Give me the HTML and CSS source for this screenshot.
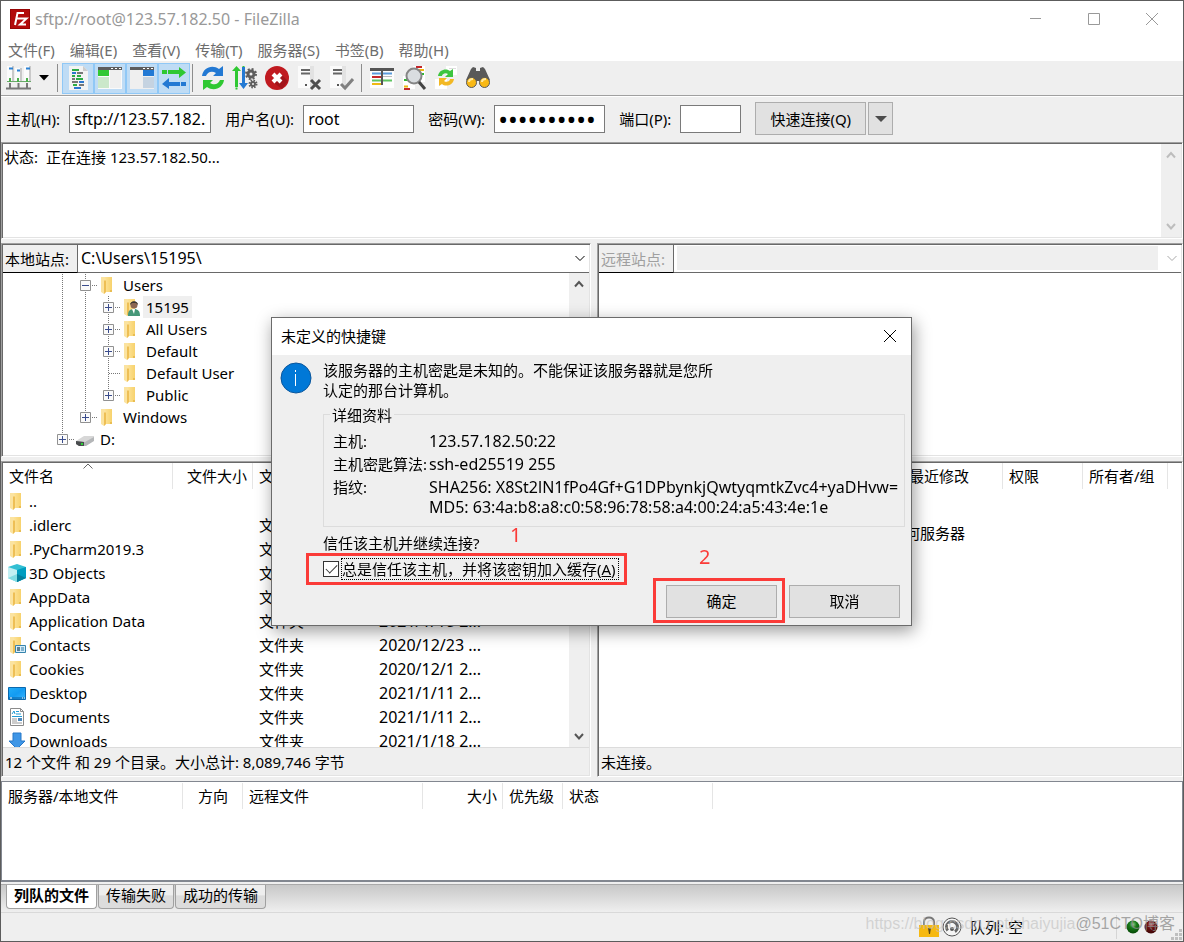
FILE: index.html
```html
<!DOCTYPE html>
<html lang="zh-CN">
<head>
<meta charset="utf-8">
<title>sftp://root@123.57.182.50 - FileZilla</title>
<link rel="stylesheet" href="styles.css">
</head>
<body>
<svg class="defs" width="0" height="0" aria-hidden="true">
  <defs>
    <linearGradient id="gold" x1="0" x2="1" y1="0" y2="0"><stop offset="0" stop-color="#fde296"/><stop offset="1" stop-color="#f7d26d"/></linearGradient>
    <linearGradient id="screen" x1="0" x2="1" y1="0" y2="1"><stop offset="0" stop-color="#22aef8"/><stop offset=".5" stop-color="#139bf2"/><stop offset="1" stop-color="#36b5ff"/></linearGradient>
    <radialGradient id="ledgreen" cx=".5" cy=".3" r=".7"><stop offset="0" stop-color="#8fc98f"/><stop offset=".4" stop-color="#177a17"/><stop offset="1" stop-color="#064706"/></radialGradient>
    <radialGradient id="ledred" cx=".5" cy=".3" r=".7"><stop offset="0" stop-color="#c79090"/><stop offset=".4" stop-color="#6e1212"/><stop offset="1" stop-color="#3c0404"/></radialGradient>
    <symbol id="folder" viewBox="0 0 18 18"><path d="M6 1h7v15H6z" fill="url(#gold)"/><path d="M2 1h4v2l1 1v12l-2 2-3-2z" fill="#fbe3a0"/><path d="M6 4l1 1v11l-2 2V5z" fill="#eebf55"/><path d="M11 14h2v2h-2z" fill="#e9bd52"/></symbol>
    <symbol id="userfolder" viewBox="0 0 18 18"><use href="#folder"/><circle cx="12" cy="7" r="3.500" fill="#8c6651"/><path d="M8 7c0-5 8-5 8 0l-2-2H10z" fill="#3b3733"/><path d="M6 17c0-4 2-6 6-6s6 2 6 7H6z" fill="#459778"/><path d="M10 11h3l-1 5z" fill="#fff"/></symbol>
    <symbol id="cardfolder" viewBox="0 0 18 18"><use href="#folder"/><path d="M7.500 9.500h10v7h-10z" fill="#d9eefa" stroke="#3684ad"/><path d="M9 11h3v4H9z" fill="#60818f"/><path d="M13 12h3M13 14h3" stroke="#2b7aa5"/></symbol>
    <symbol id="cube" viewBox="0 0 18 18"><path d="M9 0l9 3v11l-9 4-9-4V3z" fill="#32bfd3"/><path d="M0 3l9 3v12l-9-4z" fill="#c2eff3"/><path d="M9 6l9-3v11l-9 4z" fill="#009dc0"/><path d="M0 14l9-4v8z" fill="#82dce3"/><path d="M9 10l9 4-9 4z" fill="#057f9c"/></symbol>
    <symbol id="desktop" viewBox="0 0 18 18"><path d="M.5 3.500h17v12H.5z" fill="url(#screen)" stroke="#0b69ae"/><path d="M1 14h16" stroke="#0a5c9c"/><path d="M2 14h2M14 14h1M16 14h1" stroke="#fff"/></symbol>
    <symbol id="docs" viewBox="0 0 18 18"><path d="M2.500.5h10l3 3v14h-13z" fill="#fff" stroke="#8b8b8b"/><path d="M12.500.5v3h3" fill="none" stroke="#8b8b8b"/><path d="M4 6l2-3 1 3M8 3.500h3M8 6h5M4 8.500h10" fill="none" stroke="#239bd4"/><path d="M4 11h5M4 13h5M4 15h10" stroke="#999"/><path d="M10 10h4v3h-4z" fill="#4b88bd"/></symbol>
    <symbol id="down" viewBox="0 0 18 18"><path d="M5 1h8v8h4l-8 8-8-8h4z" fill="#3f96e6" stroke="#2778c9"/></symbol>
    <symbol id="drive" viewBox="0 0 18 18"><path d="M0 11l8-5h10v4l-8 5H3l-3-2z" fill="#d7d7d7"/><path d="M0 11l9 1 9-5v4l-8 5H3l-3-2z" fill="#b4b6b8"/><path d="M0 11l8 1v4H3l-3-2z" fill="#494c4e"/><path d="M5 13h2v2H5z" fill="#2bd334"/></symbol>
    <symbol id="plus" viewBox="0 0 23 22"><path d="M11.500 0v22M18 11.500h5" stroke="#777" stroke-dasharray="1 1"/><path d="M6.500 6.500h10v10h-10z" fill="#fafafa" stroke="#919191"/><path d="M8 11.500h7M11.500 8v7" stroke="#3a4c8c"/></symbol>
    <symbol id="pluslast" viewBox="0 0 23 22"><path d="M11.500 0v7M18 11.500h5" stroke="#777" stroke-dasharray="1 1"/><path d="M6.500 6.500h10v10h-10z" fill="#fafafa" stroke="#919191"/><path d="M8 11.500h7M11.500 8v7" stroke="#3a4c8c"/></symbol>
    <symbol id="minus" viewBox="0 0 23 22"><path d="M11.500 0v22M18 11.500h5" stroke="#777" stroke-dasharray="1 1"/><path d="M6.500 6.500h10v10h-10z" fill="#fafafa" stroke="#919191"/><path d="M8 11.500h7" stroke="#3a4c8c"/></symbol>
    <symbol id="line" viewBox="0 0 23 22"><path d="M11.500 0v22" stroke="#777" stroke-dasharray="1 1"/></symbol>
    <symbol id="tee" viewBox="0 0 23 22"><path d="M11.500 0v22M12 11.500h11" stroke="#777" stroke-dasharray="1 1"/></symbol>
    <symbol id="up-chev" viewBox="0 0 12 12"><path d="M2 8.500L6 4l4 4.500" fill="none" stroke="currentColor" stroke-width="2"/></symbol>
    <symbol id="down-chev" viewBox="0 0 12 12"><path d="M2 4l4 4.500L10 4" fill="none" stroke="currentColor" stroke-width="2"/></symbol>
    <symbol id="thin-chev" viewBox="0 0 12 12"><path d="M1.500 4L6 8.500 10.500 4" fill="none" stroke="currentColor"/></symbol>
    <symbol id="page" viewBox="0 0 26 26"><path d="M2 1h16v22H2z" fill="#fbfbfb"/><path d="M14 1h4v22h-4z" fill="#e2e2e2"/><path d="M5 5h9M5 8.500h9" stroke="#666" stroke-width="2"/></symbol>
  </defs>
</svg>

<div class="window">
  <header class="titlebar">
    <svg class="logo" width="20" height="20" viewBox="0 0 20 20"><path d="M0 0h20v20H0z" fill="#b30b0b"/><path d="M.5.5h19v19H.5z" fill="none" stroke="#7b0000" stroke-dasharray="1 1"/><path d="M5 16L7.500 4H14M6.500 9.500H11M10.500 9.500h6L10 15.500h6" fill="none" stroke="#fff" stroke-width="2"/></svg>
    <h1 class="title">sftp://root@123.57.182.50 - FileZilla</h1>
    <div class="winbuttons">
      <button aria-label="最小化"><svg width="14" height="14"><path d="M1 6.500h11" stroke="#999"/></svg></button>
      <button aria-label="最大化"><svg width="14" height="14"><path d="M1.500 1.500h11v11h-11z" fill="none" stroke="#999"/></svg></button>
      <button aria-label="关闭"><svg width="14" height="14"><path d="M1 1l12 12M13 1L1 13" stroke="#999"/></svg></button>
    </div>
  </header>

  <nav class="menu">
    <button>文件(F)</button><button>编辑(E)</button><button>查看(V)</button><button>传输(T)</button><button>服务器(S)</button><button>书签(B)</button><button>帮助(H)</button>
  </nav>

  <div class="toolbar">
    <button class="tool" aria-label="站点管理器"><svg width="26" height="26" viewBox="0 0 26 26"><path d="M1 1h7v15H1zM9 3h7v13H9zM18 1h7v15h-7z" fill="#fbfbfb"/><path d="M6 1h2v15H6zM14 3h2v13h-2zM23 1h2v15h-2z" fill="#c9c9c9"/><path d="M3 3.500h4M11 5.500h3M20 3.500h4" stroke="#2d82d4" stroke-width="2"/><path d="M4 18v5M12.500 18v5M21 18v5M0 23.500h25" stroke="#777" stroke-width="2"/><path d="M1 16.500h24" stroke="#69a869"/><path d="M3 13h2v4H3zM11 13h2v4h-2zM20 13h2v4h-2z" fill="#4bb04b"/></svg></button>
    <button class="tool drop" aria-label="站点列表"><svg width="10" height="6"><path d="M0 0h10L5 5.500z"/></svg></button>
    <span class="sep"></span>
    <button class="tool on" aria-label="消息日志"><svg width="26" height="26" viewBox="0 0 26 26"><path d="M4 1h14l5 5v19H4z" fill="#f3f3f3"/><path d="M18 1l5 5h-5z" fill="#ccc"/><path d="M7 5h7M7 11h3M12 11h4M11 14h7M8 20h4" stroke="#2cac45" stroke-width="2"/><path d="M12 8h6M7 14h3M7 17h6M14 20h5" stroke="#777" stroke-width="2"/><path d="M7 8h4M14 17h5M9 23h7" stroke="#2b78cf" stroke-width="2"/></svg></button>
    <button class="tool on" aria-label="本地目录树"><svg width="26" height="26" viewBox="0 0 26 26"><path d="M1 2h24v22H1z" fill="#fafafa"/><path d="M1 2h24v3H1z" fill="#5d5d5d"/><path d="M14 3.500h2M18 3.500h2M22 3.500h2" stroke="#fff"/><path d="M1 5h11v6H1z" fill="#31c833"/><path d="M1 12h11v11H1z" fill="#cbe8ca"/><path d="M13 5h11v18H13z" fill="#efefef"/></svg></button>
    <button class="tool on" aria-label="远程目录树"><svg width="26" height="26" viewBox="0 0 26 26"><path d="M1 2h24v22H1z" fill="#efefef"/><path d="M1 2h24v3H1z" fill="#5d5d5d"/><path d="M14 3.500h2M18 3.500h2M22 3.500h2" stroke="#fff"/><path d="M14 5h11v6H14z" fill="#2279d4"/><path d="M14 12h11v11H14z" fill="#c5d3e1"/></svg></button>
    <button class="tool on" aria-label="传输队列"><svg width="26" height="26" viewBox="0 0 26 26"><path d="M1 5h5v4H1zM7 5h11V2l7 5.500-7 5.500V9H7z" fill="#2fc832"/><path d="M25 17h-5v4h5zM19 17H8v-4l-7 6 7 5v-3h11z" fill="#2379d3"/></svg></button>
    <span class="sep tight"></span>
    <button class="tool" aria-label="刷新"><svg width="28" height="28" viewBox="0 0 28 28"><path d="M3 12C4 4 13 0 20 5l4-3v10H14l3-3c-5-3-9 0-10 3z" fill="#2379d3"/><path d="M25 16c-1 8-10 12-17 7l-4 3V16h10l-3 3c5 3 9 0 10-3z" fill="#2fc832"/></svg></button>
    <button class="tool" aria-label="处理队列"><svg width="26" height="26" viewBox="0 0 26 26"><path d="M4.500 1L9 6H6v16H3V6H0z" fill="#2fc832"/><path d="M4.500 24.500v-2M11.500 1v3" stroke="#2fc832" stroke-width="2"/><path d="M10 2h3v16h3l-4.500 6L7 18h3z" fill="#2379d3"/><circle cx="19" cy="9" r="3" fill="none" stroke="#5d5d5d" stroke-width="3"/><circle cx="19" cy="9" r="5" fill="none" stroke="#5d5d5d" stroke-width="2" stroke-dasharray="2 1.930"/><circle cx="21" cy="19" r="2" fill="none" stroke="#5d5d5d" stroke-width="2"/><circle cx="21" cy="19" r="3.500" fill="none" stroke="#5d5d5d" stroke-width="2" stroke-dasharray="1.500 1.250"/></svg></button>
    <button class="tool" aria-label="取消"><svg width="26" height="26" viewBox="0 0 26 26"><circle cx="13" cy="13" r="12" fill="#c01a20"/><path d="M17 9l7 7-6 8-9-7z" fill="#a2141a"/><path d="M9 9l8 8M17 9l-8 8" stroke="#fff" stroke-width="4"/></svg></button>
    <button class="tool" aria-label="断开连接"><svg width="26" height="26" viewBox="0 0 26 26"><use href="#page"/><path d="M9 19h2v2H9z" fill="#555"/><path d="M15 15l9 9M24 15l-9 9" stroke="#4d4d4d" stroke-width="3"/></svg></button>
    <button class="tool" aria-label="重新连接"><svg width="26" height="26" viewBox="0 0 26 26"><use href="#page"/><path d="M9 19h2v2H9z" fill="#555"/><path d="M13 19l4 4 8-9" fill="none" stroke="#808080" stroke-width="3"/></svg></button>
    <span class="sep"></span>
    <button class="tool" aria-label="过滤"><svg width="26" height="26" viewBox="0 0 26 26"><path d="M1 3h24v20H1z" fill="#fdfdfd"/><path d="M1 3h24v3H1z" fill="#555"/><path d="M3 8.500h9M14 8.500h9" stroke="#5b9bdc" stroke-width="2"/><path d="M3 12h9" stroke="#c4262a" stroke-width="2"/><path d="M14 11.500h9" stroke="#bbb"/><path d="M3 15.500h9M14 15.500h9" stroke="#5fc461" stroke-width="2"/><path d="M3 19h9" stroke="#efb813" stroke-width="2"/><path d="M13 6v14" stroke="#555" stroke-width="2"/></svg></button>
    <button class="tool" aria-label="目录对比"><svg width="26" height="26" viewBox="0 0 26 26"><path d="M12 1h12v16H12zM2 11h12v13H2z" fill="#fff"/><path d="M15 2h6" stroke="#c4262a" stroke-width="2"/><path d="M18 5h5M3 21.500h4" stroke="#efb813" stroke-width="2"/><path d="M3 15h4M20 9h3" stroke="#2fb832" stroke-width="2"/><path d="M3 24h6" stroke="#c4262a" stroke-width="2"/><circle cx="13" cy="11" r="7.500" fill="#d9dde0" stroke="#858585" stroke-width="2"/><path d="M18 17l6 7" stroke="#444" stroke-width="3"/></svg></button>
    <button class="tool" aria-label="同步浏览"><svg width="26" height="26" viewBox="0 0 26 26"><path d="M13 1h11v9H13zM2 14h12v10H2z" fill="#fff"/><path d="M16 3h7v1h-7z" fill="#ddd"/><path d="M5 11c1-7 9-8 12-5l3-2v8h-8l3-3c-3-2-6 0-6 2z" fill="#3dc53f"/><path d="M21 14c-1 7-9 8-12 5l-3 2v-8h8l-3 3c3 2 6 0 6-2z" fill="#f2b824"/></svg></button>
    <button class="tool" aria-label="查找文件"><svg width="26" height="26" viewBox="0 0 26 26"><path d="M8 2l3 1v3h4V3l3-1 2 2 5 11-6 5-4-4h-4l-4 4-6-5L6 4z" fill="#595959"/><circle cx="6.500" cy="17.500" r="5" fill="#f9b915" stroke="#595959"/><circle cx="19.500" cy="17.500" r="5" fill="#f9b915" stroke="#595959"/><path d="M4 17c0-2 2-3 4-3M17 17c0-2 2-3 4-3" fill="none" stroke="#ffe9a3" stroke-width="2"/></svg></button>
  </div>

  <form class="quick">
    <div class="field"><label for="host">主机(H):</label><input id="host" class="w-host" type="text" value="sftp://123.57.182.50"></div>
    <div class="field"><label for="user">用户名(U):</label><input id="user" class="w-user" type="text" value="root"></div>
    <div class="field"><label for="pass">密码(W):</label><input id="pass" class="w-user dots" type="password" value="0123456789"></div>
    <div class="field"><label for="port">端口(P):</label><input id="port" class="w-port" type="text"></div>
    <div class="connect"><button type="button" class="btn">快速连接(Q)</button><button type="button" class="btn narrow" aria-label="快速连接历史"><svg width="12" height="6"><path d="M0 0h12L6 6z" fill="#4c4c4c"/></svg></button></div>
  </form>

  <section class="sunken log">
    <p><span class="kind">状态:</span>正在连接 123.57.182.50...</p>
    <div class="scroll off"><svg width="12" height="12"><use href="#up-chev"/></svg><svg width="12" height="12"><use href="#down-chev"/></svg></div>
  </section>

  <div class="pair sites">
    <section class="sunken pane">
      <div class="path"><label for="local">本地站点:</label><div class="combo"><select id="local"><option>C:\Users\15195\</option></select><svg width="12" height="12"><use href="#thin-chev"/></svg></div></div>
      <div class="body">
        <ul class="tree">
          <li><svg class="g"><use href="#line"/></svg><svg class="g"><use href="#minus"/></svg><svg class="ic"><use href="#folder"/></svg><span>Users</span></li>
          <li><svg class="g"><use href="#line"/></svg><svg class="g"><use href="#line"/></svg><svg class="g"><use href="#plus"/></svg><svg class="ic"><use href="#userfolder"/></svg><span class="sel">15195</span></li>
          <li><svg class="g"><use href="#line"/></svg><svg class="g"><use href="#line"/></svg><svg class="g"><use href="#plus"/></svg><svg class="ic"><use href="#folder"/></svg><span>All Users</span></li>
          <li><svg class="g"><use href="#line"/></svg><svg class="g"><use href="#line"/></svg><svg class="g"><use href="#plus"/></svg><svg class="ic"><use href="#folder"/></svg><span>Default</span></li>
          <li><svg class="g"><use href="#line"/></svg><svg class="g"><use href="#line"/></svg><svg class="g"><use href="#tee"/></svg><svg class="ic"><use href="#folder"/></svg><span>Default User</span></li>
          <li><svg class="g"><use href="#line"/></svg><svg class="g"><use href="#line"/></svg><svg class="g"><use href="#pluslast"/></svg><svg class="ic"><use href="#folder"/></svg><span>Public</span></li>
          <li><svg class="g"><use href="#line"/></svg><svg class="g"><use href="#pluslast"/></svg><svg class="ic"><use href="#folder"/></svg><span>Windows</span></li>
          <li><svg class="g"><use href="#pluslast"/></svg><svg class="ic"><use href="#drive"/></svg><span>D:</span></li>
        </ul>
        <div class="scroll"><svg width="12" height="12"><use href="#up-chev"/></svg></div>
      </div>
    </section>
    <section class="sunken pane">
      <div class="path off"><label for="remote">远程站点:</label><div class="combo"><select id="remote" disabled></select><svg width="12" height="12"><use href="#thin-chev"/></svg></div></div>
    </section>
  </div>

  <div class="pair lists">
    <section class="sunken pane">
      <div class="body">
        <div class="tablewrap">
          <table class="files">
            <colgroup><col class="c-name"><col class="c-80"><col class="c-120"><col class="c-120"><col></colgroup>
            <thead><tr><th>文件名<svg class="sort" width="10" height="6"><path d="M.5 5.500L5 1l4.500 4.500" fill="none" stroke="#666"/></svg></th><th class="r">文件大小</th><th>文件类型</th><th></th><th class="end"></th></tr></thead>
            <tbody>
              <tr><td><svg class="ic"><use href="#folder"/></svg>..</td><td></td><td></td><td></td><td></td></tr>
              <tr><td><svg class="ic"><use href="#folder"/></svg>.idlerc</td><td></td><td>文件夹</td><td></td><td></td></tr>
              <tr><td><svg class="ic"><use href="#folder"/></svg>.PyCharm2019.3</td><td></td><td>文件夹</td><td></td><td></td></tr>
              <tr><td><svg class="ic"><use href="#cube"/></svg>3D Objects</td><td></td><td>文件夹</td><td></td><td></td></tr>
              <tr><td><svg class="ic"><use href="#folder"/></svg>AppData</td><td></td><td>文件夹</td><td></td><td></td></tr>
              <tr><td><svg class="ic"><use href="#folder"/></svg>Application Data</td><td></td><td>文件夹</td><td class="date">2021/1/18 2...</td><td></td></tr>
              <tr><td><svg class="ic"><use href="#cardfolder"/></svg>Contacts</td><td></td><td>文件夹</td><td class="date">2020/12/23 ...</td><td></td></tr>
              <tr><td><svg class="ic"><use href="#folder"/></svg>Cookies</td><td></td><td>文件夹</td><td class="date">2020/12/1 2...</td><td></td></tr>
              <tr><td><svg class="ic"><use href="#desktop"/></svg>Desktop</td><td></td><td>文件夹</td><td class="date">2021/1/11 2...</td><td></td></tr>
              <tr><td><svg class="ic"><use href="#docs"/></svg>Documents</td><td></td><td>文件夹</td><td class="date">2021/1/11 2...</td><td></td></tr>
              <tr><td><svg class="ic"><use href="#down"/></svg>Downloads</td><td></td><td>文件夹</td><td class="date">2021/1/18 2...</td><td></td></tr>
            </tbody>
          </table>
        </div>
        <div class="scroll low"><svg width="12" height="12"><use href="#down-chev"/></svg></div>
      </div>
      <div class="status">12 个文件 和 29 个目录。大小总计: 8,089,746 字节</div>
    </section>
    <section class="sunken pane">
      <div class="body col">
        <table class="files">
          <colgroup><col class="c-304"><col class="c-100"><col class="c-80"><col class="c-85"><col></colgroup>
          <thead><tr><th></th><th>最近修改</th><th>权限</th><th>所有者/组</th><th class="end"></th></tr></thead>
        </table>
        <p class="empty">没有连接到任何服务器</p>
      </div>
      <div class="status">未连接。</div>
    </section>
  </div>

  <section class="queue">
    <table class="files">
      <colgroup><col class="c-181"><col class="c-60"><col class="c-180"><col class="c-80"><col class="c-60"><col class="c-150"><col></colgroup>
      <thead><tr><th>服务器/本地文件</th><th class="m">方向</th><th>远程文件</th><th class="r">大小</th><th>优先级</th><th>状态</th><th class="end"></th></tr></thead>
    </table>
  </section>

  <div class="tabs" role="tablist">
    <button role="tab" aria-selected="true" class="tab active">列队的文件</button><button role="tab" class="tab">传输失败</button><button role="tab" class="tab">成功的传输</button>
  </div>

  <footer class="foot">
    <svg width="20" height="22" viewBox="0 0 20 22"><path d="M5 11V6c0-6 10-6 10 0v5" fill="none" stroke="#777" stroke-width="2"/><path d="M0 9h20v12H0z" fill="#f6b912"/><path d="M9 12h3l-1 6h-1z" fill="#5b4a17"/></svg>
    <svg width="20" height="20" viewBox="0 0 20 20"><circle cx="10" cy="10" r="9" fill="#f5f5f5" stroke="#555"/><circle cx="10" cy="10" r="5.500" fill="none" stroke="#666" stroke-width="3" stroke-dasharray="26 9" transform="rotate(140 10 10)"/><path d="M10 12l-4-5" stroke="#fff" stroke-width="2"/><circle cx="10" cy="12" r="2" fill="#555"/></svg>
    <span class="qtext">队列: 空</span>
    <span class="leds">
      <svg width="14" height="14"><circle cx="7" cy="7" r="6.500" fill="url(#ledgreen)"/></svg>
      <svg width="14" height="14"><circle cx="7" cy="7" r="6.500" fill="url(#ledred)"/></svg>
    </span>
    <svg class="grip" width="12" height="12"><path d="M8 0h3v3H8zM4 4h3v3H4zM8 4h3v3H8zM0 8h3v3H0zM4 8h3v3H4zM8 8h3v3H8z" fill="#bfbfbf"/></svg>
    <p class="mark"><span class="url">https://blog.csdn.net/zhaiyujia</span><span class="brand">@51CTO博客</span></p>
  </footer>
</div>

<div class="overlay">
  <div class="dialog" role="dialog" aria-labelledby="dlg-title">
    <div class="dlg-head"><h2 id="dlg-title">未定义的快捷键</h2><button aria-label="关闭"><svg width="14" height="14"><path d="M1 1l12 12M13 1L1 13" stroke="#000"/></svg></button></div>
    <div class="dlg-body">
      <svg class="info" width="32" height="32"><circle cx="16" cy="16" r="15" fill="#0078d7" stroke="#0a569c"/><path d="M15.500 8v2M15.500 12v12" stroke="#fff"/></svg>
      <div class="dlg-main">
        <p class="msg">该服务器的主机密匙是未知的。不能保证该服务器就是您所<br>认定的那台计算机。</p>
        <fieldset>
          <legend>详细资料</legend>
          <dl>
            <dt>主机:</dt><dd>123.57.182.50:22</dd>
            <dt>主机密匙算法:</dt><dd>ssh-ed25519 255</dd>
            <dt>指纹:</dt><dd>SHA256: X8St2lN1fPo4Gf+G1DPbynkjQwtyqmtkZvc4+yaDHvw=<br>MD5: 63:4a:b8:a8:c0:58:96:78:58:a4:00:24:a5:43:4e:1e</dd>
          </dl>
        </fieldset>
        <p class="ask">信任该主机并继续连接?</p>
        <div class="check"><input type="checkbox" id="trust" checked><label for="trust">总是信任该主机，并将该密钥加入缓存(<u>A</u>)</label><span class="hl hl-check"></span><span class="num n1">1</span></div>
      </div>
    </div>
    <div class="dlg-foot">
      <div class="okwrap"><button class="btn">确定</button><span class="hl hl-ok"></span><span class="num n2">2</span></div>
      <button class="btn">取消</button>
    </div>
  </div>
</div>
</body>
</html>
```

FILE: styles.css
```css
* { box-sizing: border-box; }
body { margin: 0; color: #000; font: 15px/20px "Noto Sans", "Noto Sans CJK SC", sans-serif; }
h1, h2, p, ul, dl, dd, fieldset { margin: 0; padding: 0; font-size: 15px; font-weight: 400; }
button, input, select { font: inherit; color: inherit; margin: 0; }
svg { display: block; flex: none; }
.defs { position: absolute; }

.window { display: flex; flex-direction: column; height: 100vh; min-height: 700px; background: #efefef; border: 1px solid #5c5c5c; overflow: hidden; }

.titlebar { display: flex; align-items: center; flex: none; height: 37px; padding: 0 2px 1px 9px; background: #fff; color: #999; }
.title { margin-left: 5px; flex: 1; font-size: 16px; }
.winbuttons { display: flex; }
.winbuttons button { display: grid; place-items: center; width: 58px; height: 36px; padding: 0; border: 0; background: none; }

.menu { display: flex; gap: 15px; flex: none; height: 23px; padding-left: 7px; background: #fff; color: #6d6d6d; }
.menu button { padding: 0; border: 0; background: none; }

.toolbar { display: flex; align-items: center; flex: none; height: 35px; padding-left: 2px; border-bottom: 1px solid #a0a0a0; }
.tool { display: grid; place-items: center; width: 32px; height: 31px; padding: 0; border: 1px solid transparent; background: none; }
.tool.drop { width: 18px; }
.tool.on { background: #bfdcf5; border-color: #90c8f6; }
.sep { width: 1px; height: 28px; margin: 0 4px; background: #8c8c8c; }
.sep.tight { margin: 0 4px 0 2px; }

.quick { display: flex; align-items: center; flex: none; height: 46px; padding: 0 0 2px 5px; border-top: 1px solid #fff; }
.field { display: flex; align-items: center; gap: 9px; margin-right: 14px; white-space: nowrap; }
.field input { height: 28px; padding: 0 4px; border: 1px solid #7a7a7a; background: #fff; outline: 0; font-size: 16px; }
.field .dots { padding: 0 3px; font-size: 26px; }
.w-host { width: 142px; }
.w-user { width: 111px; }
.w-port { width: 61px; }
.connect { display: flex; gap: 2px; }
.btn { display: grid; place-items: center; width: 111px; height: 33px; padding: 0; border: 1px solid #adadad; background: #e1e1e1; }
.btn.narrow { width: 25px; }

.sunken { display: flex; padding: 1px; background: #fff; border: 1px solid; border-color: #a0a0a0 #fff #fff #a0a0a0; box-shadow: inset 1px 1px #696969, inset -1px -1px #e3e3e3; }
.log { flex: 93 1 0; margin-bottom: 4px; justify-content: space-between; }
.log p { padding: 3px 1px; }
.kind { margin-right: 8px; }
.scroll { display: flex; flex-direction: column; justify-content: space-between; flex: none; width: 20px; padding: 5px 4px; background: #efefef; color: #555; }
.scroll.off { color: #bdbdbd; }
.scroll.low { justify-content: flex-end; }

.pair { display: grid; grid-template-columns: 590fr 586fr; gap: 6px; min-height: 0; }
.sites { flex: 214 1 0; margin-bottom: 4px; }
.lists { flex: 317 1 0; margin-bottom: 4px; }
.pane { flex-direction: column; min-width: 0; min-height: 0; overflow: hidden; }
.body { display: flex; flex: 1; min-height: 0; overflow: hidden; }
.body.col { flex-direction: column; }

.path { display: flex; flex: none; height: 28px; }
.path label { padding: 4px 2px; width: 75px; white-space: nowrap; background: #efefef; border-right: 1px solid #696969; border-bottom: 1px solid #000; }
.path.off label { color: #a0a0a0; }
.combo { display: flex; align-items: center; flex: 1; padding: 1px 3px 1px 0; border-bottom: 1px solid #696969; }
.combo select { flex: 1; height: 24px; padding: 0 3px; border: 0; background: #fff; appearance: none; font-size: 16px; }
.path.off .combo { padding-left: 3px; color: #aaa; gap: 8px; }
.path.off select { background: #efefef; opacity: 1; }

.tree { flex: 1; padding: 1px 0 0 48px; list-style: none; overflow: hidden; }
.tree li { display: flex; align-items: center; height: 22px; }
.g { width: 23px; height: 22px; }
.ic { width: 18px; height: 18px; }
.tree .ic { margin: 0 3px 0 2px; }
.tree span { padding: 0 3px; line-height: 22px; }
.sel { background: #efefef; }

.tablewrap { flex: 1; overflow: hidden; }
.files { width: 100%; table-layout: fixed; border-collapse: separate; border-spacing: 0; }
.files th { position: relative; height: 26px; padding: 0 5px 0 6px; font-weight: 400; text-align: left; white-space: nowrap; border-right: 1px solid #e5e5e5; }
.files th.end { border-right: 0; }
.files th.r { text-align: right; }
.files th.m { text-align: center; }
.files td { height: 24px; padding: 0 5px 0 6px; white-space: nowrap; }
.files td .ic { float: left; margin: 1px 3px 0 0; }
.files td:first-child { padding-left: 5px; }
.files .date { font-size: 16px; }
.sort { position: absolute; top: 0; left: 50%; margin-left: -5px; }
.c-name { width: 170px; }
.c-60 { width: 60px; }
.c-80 { width: 80px; }
.c-85 { width: 85px; }
.c-100 { width: 100px; }
.c-120 { width: 120px; }
.c-150 { width: 150px; }
.c-180 { width: 180px; }
.c-181 { width: 181px; }
.c-304 { width: 304px; }
.empty { margin-top: 34px; text-align: center; }
.status { flex: none; height: 28px; padding: 4px 2px; background: #efefef; border-top: 1px solid #dcdcdc; }

.queue { flex: 97 1 0; min-height: 0; padding-top: 1px; background: #fff; border: 1px solid #828790; border-bottom-width: 2px; overflow: hidden; }

.tabs { display: flex; align-items: flex-start; gap: 1px; flex: none; height: 29px; margin-top: 2px; padding-left: 5px; background: linear-gradient(#c8c8c8, #efefef); border-top: 1px solid #a9a9a9; border-bottom: 1px solid #d9d9d9; }
.tab { height: 24px; padding: 0 7px 3px; border: 1px solid #a0a0a0; border-top: 0; border-radius: 0 0 4px 4px; background: linear-gradient(#eee 45%, #dcdcdc 46%); line-height: 20px; }
.tab.active { background: #fff; font-weight: 700; }

.foot { position: relative; display: flex; align-items: center; flex: none; height: 28px; padding-left: 918px; gap: 3px; }
.qtext { margin-left: 5px; flex: 1; white-space: nowrap; }
.leds { display: flex; align-items: center; gap: 4px; height: 24px; padding: 0 10px 0 9px; border-left: 1px solid #d5d5d5; }
.grip { align-self: flex-end; }
.mark { position: absolute; right: 8px; top: 1px; display: flex; white-space: nowrap; font-family: "Liberation Sans", "Noto Sans CJK SC", sans-serif; font-size: 16px; }
.url { color: rgba(190, 190, 190, .6); }
.brand { color: rgba(140, 140, 140, .75); }

.overlay { position: fixed; inset: 0; display: grid; place-items: center; padding-right: 1px; }
.dialog { width: 641px; background: #efefef; border: 1px solid #6b6b6b; box-shadow: 2px 5px 16px rgba(0, 0, 0, .4); }
.dlg-head { display: flex; align-items: center; justify-content: space-between; height: 37px; padding: 0 14px 0 9px; background: #fff; }
.dlg-head button { padding: 0; border: 0; background: none; }
.dlg-body { display: flex; gap: 11px; padding: 5px 6px 0 8px; }
.info { margin-top: 2px; }
.dlg-main { flex: 1; min-width: 0; }
fieldset { margin-top: 5px; padding: 6px 2px 9px 9px; border: 1px solid #dcdcdc; }
legend { padding: 0 2px; margin-left: -3px; }
dl { display: grid; grid-template-columns: 96px 1fr; row-gap: 3px; white-space: nowrap; }
dd { font-size: 16px; }
.ask { margin-top: 6px; }
.check { position: relative; display: flex; align-items: center; gap: 3px; margin-top: 6px; width: max-content; }
.check input { width: 16px; height: 16px; margin: 0; appearance: none; border: 1px solid #333; background: #fff; display: grid; place-items: center; }
.check input:checked::before { content: ""; width: 10px; height: 5px; border: solid #333; border-width: 0 0 1px 1px; transform: rotate(-45deg) translate(1px, -1px); }
.check label { padding-right: 2px; outline: 1px dotted #000; }
.dlg-foot { display: flex; justify-content: flex-end; gap: 12px; padding: 6px 11px 7px; }
.okwrap { position: relative; }
.hl { position: absolute; border: 3px solid #fb3b38; pointer-events: none; }
.hl-check { inset: -6px -9px -6px -17px; }
.hl-ok { inset: -7px -8px -5px -13px; }
.num { position: absolute; color: #fb3b38; font-size: 20px; }
.n1 { left: 187px; top: -34px; }
.n2 { left: 33px; top: -38px; }
```
